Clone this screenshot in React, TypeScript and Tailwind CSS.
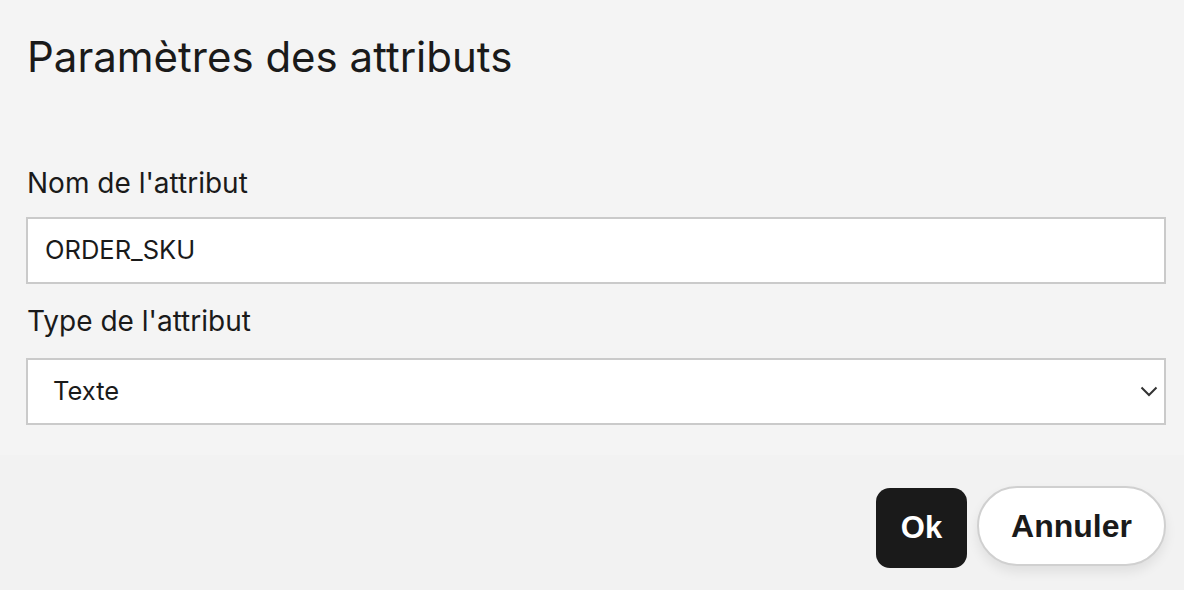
import React from "react";

export default function App() {
  return (
    <div className="w-[1184px] h-[590px] bg-[#f4f4f4] flex flex-col overflow-hidden" style={{ fontFamily: "Inter, 'Noto Sans', sans-serif" }}>
      <div className="flex flex-col pl-[26px] pr-[18px]">
        <h1 className="h-[114px] pt-[28px] text-[42px] leading-[58px] text-[#1a1a1a] pl-[1px]">Paramètres des attributs</h1>
        <div className="mt-[40px] h-[46px] pt-[12px] text-[28px] leading-[34px] text-[#1a1a1a] pl-[1px]">Nom de l'attribut</div>
        <div className="mt-[17px] h-[67px] bg-white border-2 border-[#cacaca] flex items-center pl-[17px] text-[25.5px] text-[#1a1a1a]">
          ORDER_SKU
        </div>
        <div className="h-[74px] flex items-center text-[28px] text-[#1a1a1a] pl-[1px]">Type de l'attribut</div>
        <div className="h-[67px] bg-white border-2 border-[#cacaca] flex items-center justify-between pl-[25px] pr-[6px] text-[25.5px] text-[#1a1a1a]">
          <span>Texte</span>
          <svg width="18" height="11" viewBox="0 0 18 11" fill="none">
            <path d="M1.5 1.5 L9 9 L16.5 1.5" stroke="#333" strokeWidth="2" />
          </svg>
        </div>
      </div>
      <div className="mt-[30px] flex-1 bg-[#f2f2f2] flex justify-end items-start gap-[10px] pr-[18px] pt-[31px]">
        <button className="mt-[2px] w-[91px] h-[80px] rounded-[14px] bg-[#1a1a1a] text-white text-[31px] font-bold" style={{ fontFamily: "'Liberation Sans', Arial, sans-serif" }}>
          Ok
        </button>
        <button className="w-[189px] h-[80px] rounded-[40px] bg-white border-2 border-[#d0d0d0] text-[#1a1a1a] text-[32px] font-bold shadow-[0_6px_12px_rgba(0,0,0,0.08)]" style={{ fontFamily: "'Liberation Sans', Arial, sans-serif" }}>
          Annuler
        </button>
      </div>
    </div>
  );
}
